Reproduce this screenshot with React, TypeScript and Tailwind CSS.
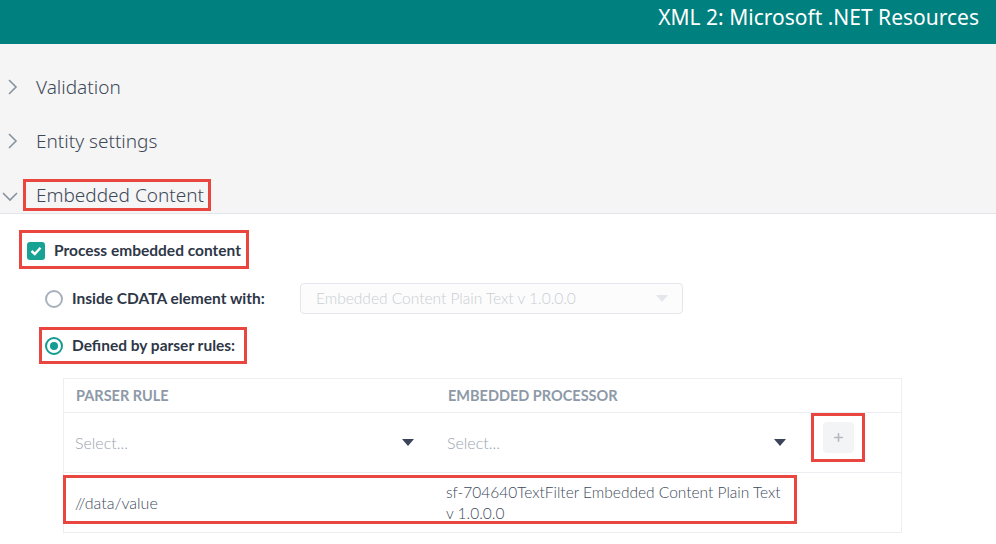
import { Plus } from "lucide-react";

const RED = "border-[3px] border-[#e8463e]";

function ChevronRight() {
  return (
    <svg width="12" height="16" viewBox="0 0 12 16" className="shrink-0">
      <polyline points="2,1 9,8 2,15" fill="none" stroke="#8793a1" strokeWidth="1.6" />
    </svg>
  );
}

function ChevronDown() {
  return (
    <svg width="16" height="12" viewBox="0 0 16 12" className="shrink-0">
      <polyline points="1,3 8,10 15,3" fill="none" stroke="#8793a1" strokeWidth="1.6" />
    </svg>
  );
}

function Caret({ color = "#3c4459" }: { color?: string }) {
  return (
    <svg width="12" height="7" viewBox="0 0 12 7" className="shrink-0">
      <polygon points="0,0 12,0 6,7" fill={color} />
    </svg>
  );
}

function Radio({ checked }: { checked?: boolean }) {
  return (
    <span
      className={`flex h-[18px] w-[18px] shrink-0 items-center justify-center rounded-full border-2 ${
        checked ? "border-[#139c91]" : "border-[#a7b1bd]"
      } bg-white`}
    >
      {checked && <span className="h-[8px] w-[8px] rounded-full bg-[#139c91]" />}
    </span>
  );
}

export default function App() {
  return (
    <div className="h-[544px] w-[996px] overflow-hidden bg-white font-['Lato',sans-serif] text-[#2e3747]">
      {/* Title bar */}
      <div className="flex h-[44px] items-center justify-end bg-[#00807e] pr-[17px] pb-[8px]">
        <span className="font-['Noto_Sans',sans-serif] text-[21px] text-white">XML 2: Microsoft .NET Resources</span>
      </div>

      {/* Accordion headers */}
      <div className="border-b border-[#e2e5e9] bg-[#f5f5f5] pt-[16px] font-['Noto_Sans',sans-serif] text-[19px] font-light text-[#3d4959]">
        <div className="flex h-[54px] items-center gap-[17px] pl-[7px]">
          <ChevronRight />
          <span>Validation</span>
        </div>
        <div className="flex h-[54px] items-center gap-[17px] pl-[7px]">
          <ChevronRight />
          <span>Entity settings</span>
        </div>
        <div className="flex h-[45px] items-start pt-[11px]">
          <span className="mt-[11px] ml-[2px]">
            <ChevronDown />
          </span>
          <span className={`ml-[5px] flex h-[32px] items-center pl-[10px] pr-[4px] ${RED}`}>Embedded Content</span>
        </div>
      </div>

      {/* Embedded content body */}
      <div className="pt-[16px]">
        <div className={`ml-[19px] flex h-[39px] w-[230px] items-center gap-[9px] pl-[5px] pt-[2px] ${RED}`}>
          <span className="flex h-[18px] w-[18px] items-center justify-center rounded-[3px] bg-[#17a293]">
            <svg width="12" height="10" viewBox="0 0 12 10">
              <polyline points="1.5,5 4.8,8 10.5,1.8" fill="none" stroke="white" strokeWidth="2.4" />
            </svg>
          </span>
          <span className="text-[15.5px] font-bold">Process embedded content</span>
        </div>

        <div className="mt-[14px] flex h-[31px] items-center">
          <div className="ml-[45px] flex w-[255px] items-center gap-[9px]">
            <Radio />
            <span className="text-[15.5px] font-bold">Inside CDATA element with:</span>
          </div>
          <div className="flex h-[31px] w-[383px] items-center justify-between rounded-[4px] border border-[#e3e6ea] bg-[#fcfcfc] pl-[15px] pr-[14px]">
            <span className="text-[15.5px] font-light text-[#c9ced4]">Embedded Content Plain Text v 1.0.0.0</span>
            <Caret color="#e3e6ea" />
          </div>
        </div>

        <div className={`mt-[13px] ml-[39px] flex h-[37px] w-[208px] items-center gap-[9px] pl-[3px] ${RED}`}>
          <Radio checked />
          <span className="text-[15.5px] font-bold">Defined by parser rules:</span>
        </div>

        {/* Parser rules table */}
        <div className="mt-[14px] ml-[63px] w-[839px] border border-[#eceef1]">
          <div className="flex h-[34px] items-center border-b border-[#eceef1] text-[14.5px] font-bold uppercase text-[#8d99a7]">
            <span className="w-[372px] pl-[12px]">Parser Rule</span>
            <span className="pl-[12px]">Embedded Processor</span>
          </div>
          <div className="flex h-[60px] items-center border-b border-[#eceef1] text-[16px] font-light text-[#9aa3af]">
            <div className="flex w-[372px] items-center justify-between pl-[11px] pr-[22px]">
              <span>Select...</span>
              <Caret />
            </div>
            <div className="flex w-[372px] items-center justify-between pl-[11px] pr-[22px]">
              <span>Select...</span>
              <Caret />
            </div>
            <div className={`ml-[3px] flex h-[49px] w-[54px] items-center justify-center self-start ${RED}`}>
              <span className="flex h-[31px] w-[31px] items-center justify-center rounded-[4px] bg-[#f3f4f6]">
                <Plus size={13} strokeWidth={3} color="#b3b8bf" />
              </span>
            </div>
          </div>
          <div className="relative flex h-[59px] items-center font-light text-[#404a5b]">
            <span className="w-[372px] pl-[11px] text-[16px]">//data/value</span>
            <span className="w-[345px] pl-[10px] text-[15.5px] leading-[21px]">
              sf-704640TextFilter Embedded Content Plain Text v 1.0.0.0
            </span>
            <div className={`pointer-events-none absolute left-[-1px] top-[2px] h-[49px] w-[734px] ${RED}`} />
          </div>
        </div>
      </div>
    </div>
  );
}
